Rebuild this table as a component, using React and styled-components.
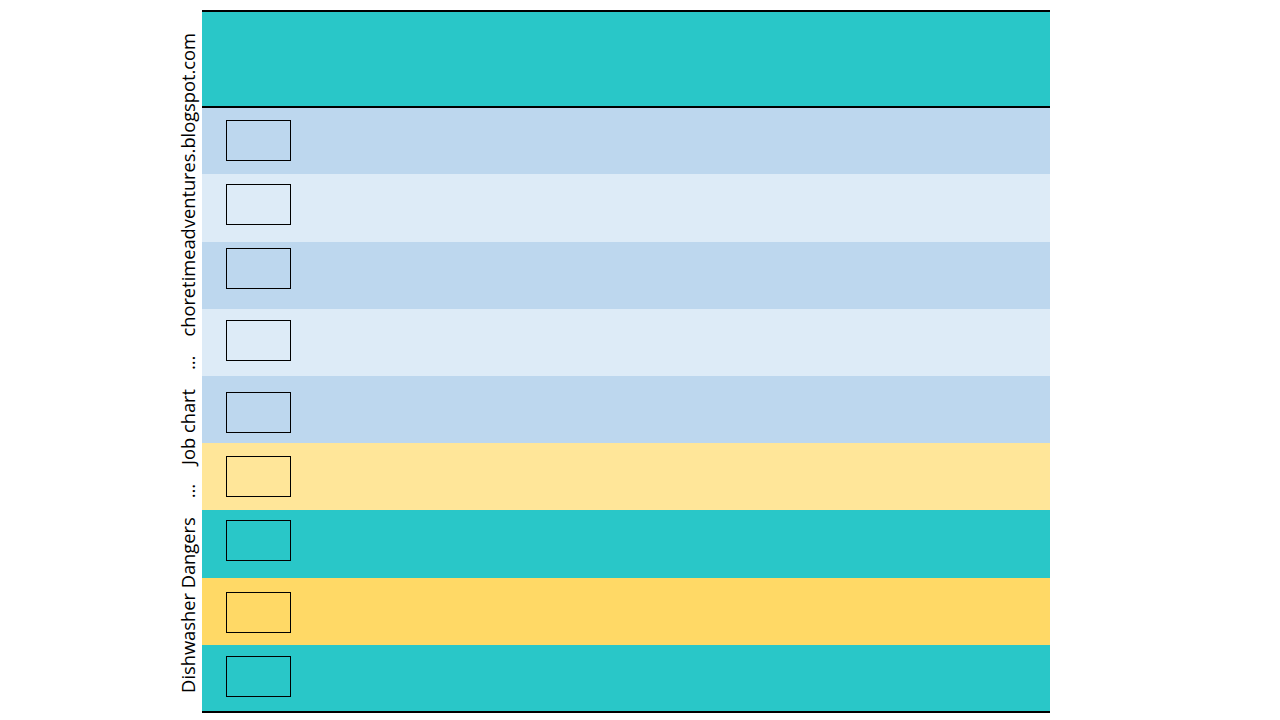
import React from "react";
import styled, { createGlobalStyle } from "styled-components";

const GlobalStyle = createGlobalStyle`
  html, body {
    margin: 0;
    padding: 0;
    background: #ffffff;
  }
  body {
    font-family: "Open Sans", "DejaVu Sans", sans-serif;
  }
`;

const Page = styled.div`
  width: 1280px;
  height: 720px;
  display: flex;
  align-items: flex-start;
  padding-top: 10px;
  box-sizing: border-box;
`;

const SideLabel = styled.div`
  width: 202px;
  height: 703px;
  display: flex;
  justify-content: flex-end;
  align-items: flex-end;
  padding-right: 3px;
  padding-bottom: 20px;
  box-sizing: border-box;
`;

const LabelText = styled.span`
  writing-mode: vertical-rl;
  transform: rotate(180deg);
  white-space: pre;
  font-family: "Open Sans", sans-serif;
  font-size: 18.3px;
  line-height: 22px;
  color: #000;
`;

const Chart = styled.div`
  width: 848px;
  display: flex;
  flex-direction: column;
  border-top: 2px solid #000;
  border-bottom: 2px solid #000;
`;

const Header = styled.div`
  height: 94px;
  background: #29c7c8;
  border-bottom: 2px solid #000;
`;

const Row = styled.div`
  height: ${(p) => p.$h}px;
  background: ${(p) => p.$bg};
  padding-left: 24px;
  padding-top: ${(p) => p.$top}px;
  box-sizing: border-box;
`;

const CheckBox = styled.div`
  width: 65px;
  height: 41px;
  border: 1px solid #000;
  box-sizing: border-box;
`;

const rows = [
  { h: 66, bg: "#bdd7ee", top: 12 },
  { h: 68, bg: "#ddebf7", top: 10 },
  { h: 67, bg: "#bdd7ee", top: 6 },
  { h: 67, bg: "#ddebf7", top: 11 },
  { h: 67, bg: "#bdd7ee", top: 16 },
  { h: 67, bg: "#ffe699", top: 13 },
  { h: 68, bg: "#29c7c8", top: 10 },
  { h: 67, bg: "#ffd966", top: 14 },
  { h: 66, bg: "#29c7c8", top: 11 },
];

export default function App() {
  return (
    <>
      <GlobalStyle />
      <Page>
        <SideLabel>
          <LabelText>
            {"Dishwasher Dangers    ...    Job chart    ...    choretimeadventures.blogspot.com"}
          </LabelText>
        </SideLabel>
        <Chart>
          <Header />
          {rows.map((r, i) => (
            <Row key={i} $h={r.h} $bg={r.bg} $top={r.top}>
              <CheckBox />
            </Row>
          ))}
        </Chart>
      </Page>
    </>
  );
}
